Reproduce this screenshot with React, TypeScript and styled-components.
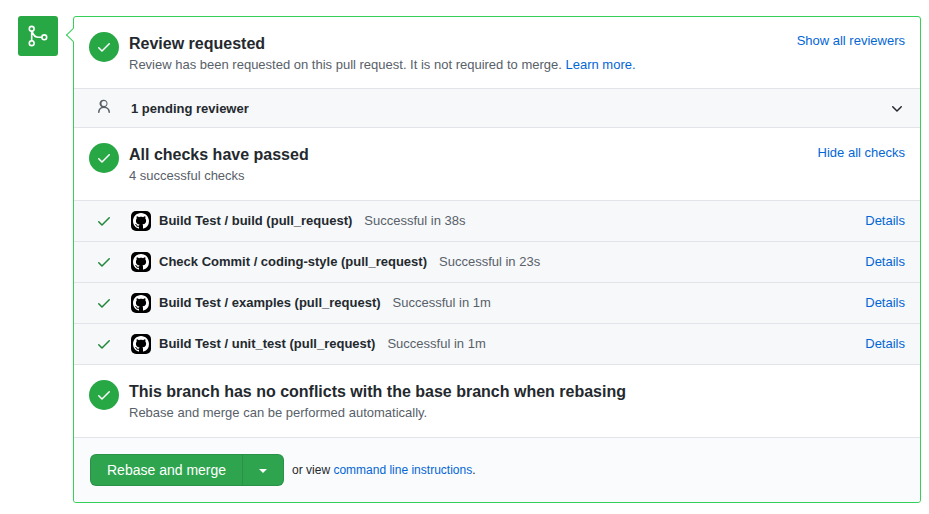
import React from 'react';
import styled, {createGlobalStyle} from 'styled-components';

const GlobalStyle = createGlobalStyle`
    html, body {
        margin: 0;
        padding: 0;
        background: #fff;
    }
    body {
        font-family: "Liberation Sans", Arial, sans-serif;
        font-size: 13px;
        color: #24292e;
    }
    a {
        color: #0366d6;
        text-decoration: none;
    }
`;

const CHECK_PATH = 'M13.78 4.22a.75.75 0 0 1 0 1.06l-7.25 7.25a.75.75 0 0 1-1.06 0L2.22 9.28a.751.751 0 0 1 .018-1.042.751.751 0 0 1 1.042-.018L6 10.94l6.72-6.72a.75.75 0 0 1 1.06 0Z';
const GITHUB_PATH = 'M8 0C3.58 0 0 3.58 0 8c0 3.54 2.29 6.53 5.47 7.59.4.07.55-.17.55-.38 0-.19-.01-.82-.01-1.49-2.01.37-2.53-.49-2.69-.94-.09-.23-.48-.94-.82-1.13-.28-.15-.68-.52-.01-.53.63-.01 1.08.58 1.23.82.72 1.21 1.87.87 2.33.66.07-.52.28-.87.51-1.07-1.78-.2-3.64-.89-3.64-3.95 0-.87.31-1.59.82-2.15-.08-.2-.36-1.02.08-2.12 0 0 .67-.21 2.2.82.64-.18 1.32-.27 2-.27.68 0 1.36.09 2 .27 1.53-1.04 2.2-.82 2.2-.82.44 1.1.16 1.92.08 2.12.51.56.82 1.27.82 2.15 0 3.07-1.87 3.75-3.65 3.95.29.25.54.73.54 1.48 0 1.07-.01 1.93-.01 2.2 0 .21.15.46.55.38A8.013 8.013 0 0016 8c0-4.42-3.58-8-8-8z';
const PERSON_PATH = 'M10.561 8.073a6.005 6.005 0 0 1 3.432 5.142.75.75 0 1 1-1.498.07 4.5 4.5 0 0 0-8.99 0 .75.75 0 0 1-1.498-.07 6.004 6.004 0 0 1 3.431-5.142 3.999 3.999 0 1 1 4.123 0ZM10.5 4.5a2.5 2.5 0 1 0-5 0 2.5 2.5 0 0 0 5 0Z';
const CHEVRON_PATH = 'M12.78 5.22a.749.749 0 0 1 0 1.06l-4.25 4.25a.749.749 0 0 1-1.06 0L3.22 6.28a.749.749 0 1 1 1.06-1.06L8 8.939l3.72-3.719a.749.749 0 0 1 1.06 0Z';

const Page = styled.div`
    display: flex;
    align-items: flex-start;
    gap: 15px;
    padding: 16px 8px 11px 18px;
`;

const MergeBadge = styled.div`
    flex: none;
    width: 40px;
    height: 40px;
    border-radius: 3px;
    background: #28a745;
    display: flex;
    align-items: center;
    justify-content: center;
`;

const Panel = styled.div`
    position: relative;
    flex: 1;
    border: 1px solid #34d058;
    border-radius: 3px;
    background: #fff;

    &::before {
        content: '';
        position: absolute;
        left: -6px;
        top: 13px;
        width: 9px;
        height: 9px;
        background: #fff;
        border-left: 1px solid #34d058;
        border-bottom: 1px solid #34d058;
        transform: rotate(45deg);
    }
`;

const Section = styled.div<{$height: number}>`
    position: relative;
    display: flex;
    align-items: flex-start;
    height: ${(p) => p.$height}px;
    box-sizing: border-box;
    padding: 15px 15px 0;
    border-bottom: 1px solid #e1e4e8;
`;

const StatusCircle = styled.div`
    flex: none;
    width: 30px;
    height: 30px;
    margin-right: 10px;
    border-radius: 50%;
    background: #28a745;
    display: flex;
    align-items: center;
    justify-content: center;
`;

const SectionBody = styled.div`
    flex: 1;
    padding-top: 2px;
`;

const Title = styled.h3`
    margin: 0;
    font-size: 16px;
    line-height: 20px;
    font-weight: 700;
    color: #24292e;
`;

const Subtitle = styled.div`
    margin-top: 1px;
    font-size: 13px;
    line-height: 19px;
    color: #586069;
`;

const SideLink = styled.a<{$top: number}>`
    font-size: 13px;
    line-height: 19px;
    margin-top: ${(p) => p.$top}px;
`;

const Row = styled.div<{$height: number; $raised?: boolean}>`
    display: flex;
    align-items: center;
    height: ${(p) => p.$height}px;
    box-sizing: border-box;
    padding: 0 15px ${(p) => (p.$raised ? 1 : 0)}px;
    background: #f6f8fa;
    border-bottom: 1px solid #e1e4e8;
    font-size: 13px;
`;

const RowIcon = styled.div<{$lift?: number}>`
    flex: none;
    width: 30px;
    margin-right: 12px;
    margin-bottom: ${(p) => p.$lift ?? 0}px;
    display: flex;
    justify-content: center;
`;

const Avatar = styled.div`
    flex: none;
    width: 20px;
    height: 20px;
    margin-right: 8px;
    border-radius: 5px;
    background: #000;
    display: flex;
    align-items: center;
    justify-content: center;
`;

const RowName = styled.strong`
    color: #24292e;
    font-weight: 700;
`;

const RowStatus = styled.span`
    margin-left: 12px;
    color: #586069;
    flex: 1;
`;

const Spacer = styled.span`
    flex: 1;
`;

const ChevronButton = styled.span`
    display: flex;
    margin-top: 2px;
`;

const Footer = styled.div`
    display: flex;
    align-items: center;
    height: 64px;
    box-sizing: border-box;
    padding: 0 16px;
    background: #fafbfc;
    border-radius: 0 0 3px 3px;
`;

const MergeGroup = styled.div`
    display: flex;
    height: 32px;
    box-sizing: border-box;
    border: 1px solid rgba(27, 31, 35, 0.15);
    border-radius: 6px;
    background: #2ea44f;
    color: #fff;
    font-size: 14px;
`;

const MergeLabel = styled.div`
    display: flex;
    align-items: center;
    padding: 0 16px;
    border-right: 1px solid rgba(27, 31, 35, 0.15);
`;

const CaretPart = styled.div`
    display: flex;
    align-items: center;
    justify-content: center;
    width: 40px;

    &::after {
        content: '';
        width: 0;
        height: 0;
        border-left: 4px solid transparent;
        border-right: 4px solid transparent;
        border-top: 4px solid #fff;
        margin-top: 2px;
    }
`;

const FooterHint = styled.span`
    margin-left: 8px;
    font-size: 12px;
    color: #24292e;
`;

function Octicon({path, size, color}: {path: string; size: number; color: string}) {
    return (
        <svg
            width={size}
            height={size}
            viewBox='0 0 16 16'
            fill={color}
        >
            <path
                fillRule='evenodd'
                d={path}
            />
        </svg>
    );
}

function MergeIcon() {
    return (
        <svg
            width={24}
            height={24}
            viewBox='0 0 24 24'
            fill='none'
            stroke='#fff'
            strokeWidth={1.6}
            strokeLinecap='round'
        >
            <circle
                cx='5.7'
                cy='4.8'
                r='2.4'
            />
            <circle
                cx='5.7'
                cy='19.2'
                r='2.4'
            />
            <circle
                cx='18.3'
                cy='13.3'
                r='2.4'
            />
            <path d='M5.7 7.2v9.6M6.1 7.2c.9 3.8 3.4 6.1 6.8 6.1h3'/>
        </svg>
    );
}

function StatusIcon() {
    return (
        <StatusCircle>
            <Octicon
                path={CHECK_PATH}
                size={16}
                color='#fff'
            />
        </StatusCircle>
    );
}

const checks = [
    {name: 'Build Test / build (pull_request)', status: 'Successful in 38s'},
    {name: 'Check Commit / coding-style (pull_request)', status: 'Successful in 23s'},
    {name: 'Build Test / examples (pull_request)', status: 'Successful in 1m'},
    {name: 'Build Test / unit_test (pull_request)', status: 'Successful in 1m'},
];

export default function App() {
    return (
        <Page>
            <GlobalStyle/>
            <MergeBadge>
                <MergeIcon/>
            </MergeBadge>
            <Panel>
                <Section $height={72}>
                    <StatusIcon/>
                    <SectionBody>
                        <Title>Review requested</Title>
                        <Subtitle>
                            {'Review has been requested on this pull request. It is not required to merge. '}
                            <a href='#learn'>Learn more.</a>
                        </Subtitle>
                    </SectionBody>
                    <SideLink
                        href='#reviewers'
                        $top={-1}
                    >
                        Show all reviewers
                    </SideLink>
                </Section>
                <Row $height={39}>
                    <RowIcon $lift={3}>
                        <Octicon
                            path={PERSON_PATH}
                            size={16}
                            color='#586069'
                        />
                    </RowIcon>
                    <RowName>1 pending reviewer</RowName>
                    <Spacer/>
                    <ChevronButton>
                        <Octicon
                            path={CHEVRON_PATH}
                            size={16}
                            color='#24292e'
                        />
                    </ChevronButton>
                </Row>
                <Section $height={73}>
                    <StatusIcon/>
                    <SectionBody>
                        <Title>All checks have passed</Title>
                        <Subtitle>4 successful checks</Subtitle>
                    </SectionBody>
                    <SideLink
                        href='#checks'
                        $top={0}
                    >
                        Hide all checks
                    </SideLink>
                </Section>
                {checks.map((check) => (
                    <Row
                        key={check.name}
                        $height={41}
                        $raised={true}
                    >
                        <RowIcon>
                            <Octicon
                                path={CHECK_PATH}
                                size={16}
                                color='#22863a'
                            />
                        </RowIcon>
                        <Avatar>
                            <Octicon
                                path={GITHUB_PATH}
                                size={16}
                                color='#fff'
                            />
                        </Avatar>
                        <RowName>{check.name}</RowName>
                        <RowStatus>{check.status}</RowStatus>
                        <a href='#details'>Details</a>
                    </Row>
                ))}
                <Section $height={73}>
                    <StatusIcon/>
                    <SectionBody>
                        <Title>This branch has no conflicts with the base branch when rebasing</Title>
                        <Subtitle>Rebase and merge can be performed automatically.</Subtitle>
                    </SectionBody>
                </Section>
                <Footer>
                    <MergeGroup>
                        <MergeLabel>Rebase and merge</MergeLabel>
                        <CaretPart/>
                    </MergeGroup>
                    <FooterHint>
                        {'or view '}
                        <a href='#cli'>command line instructions</a>
                        .
                    </FooterHint>
                </Footer>
            </Panel>
        </Page>
    );
}
